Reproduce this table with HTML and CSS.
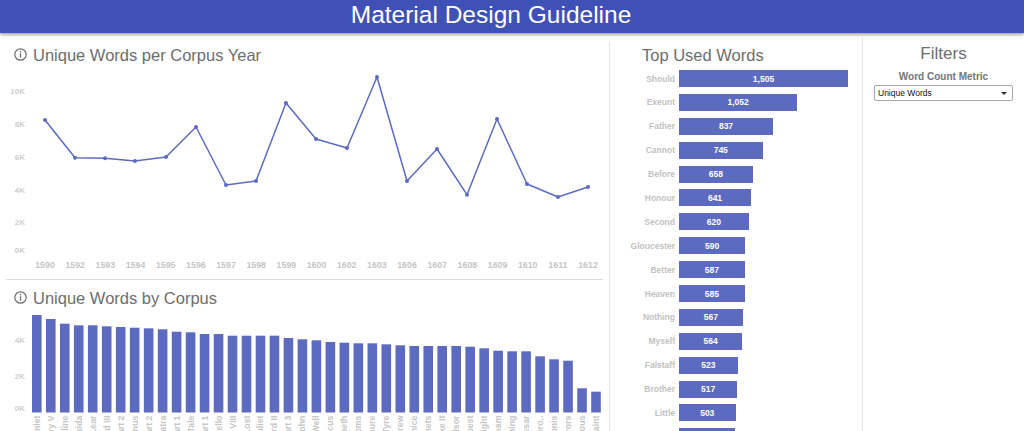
FILE: index.html
```html
<!DOCTYPE html>
<html lang="en">
<head>
<meta charset="utf-8">
<title>Material Design Guideline</title>
<link rel="stylesheet" href="styles.css">
</head>
<body>
<header class="appbar"><h1>Material Design Guideline</h1></header>
<main class="dash">
  <section class="panel-main">
    <div class="trend">
      <h2 class="chart-title"><svg class="info" viewBox="0 0 13 13" width="13" height="13"><circle cx="6.5" cy="6.5" r="5.7" fill="none" stroke="#6e6e6e" stroke-width="1.2"/><rect x="5.9" y="3" width="1.25" height="1.3" fill="#6e6e6e"/><rect x="5.9" y="5.2" width="1.25" height="4.5" fill="#6e6e6e"/></svg>Unique Words per Corpus Year</h2>
      <svg class="chart" width="597" height="214" viewBox="6 65 597 214">
        <g class="axis-y" text-anchor="end">
          <text x="25" y="94">10K</text>
          <text x="25" y="127">8K</text>
          <text x="25" y="160">6K</text>
          <text x="25" y="193">4K</text>
          <text x="25" y="224.5">2K</text>
          <text x="25" y="253">0K</text>
        </g>
        <g class="axis-x" text-anchor="middle">
          <text x="45" y="267.5">1590</text>
          <text x="75.2" y="267.5">1592</text>
          <text x="105.3" y="267.5">1593</text>
          <text x="135.5" y="267.5">1594</text>
          <text x="165.7" y="267.5">1595</text>
          <text x="195.9" y="267.5">1596</text>
          <text x="226" y="267.5">1597</text>
          <text x="256.2" y="267.5">1598</text>
          <text x="286.4" y="267.5">1599</text>
          <text x="316.5" y="267.5">1600</text>
          <text x="346.7" y="267.5">1602</text>
          <text x="376.9" y="267.5">1603</text>
          <text x="407" y="267.5">1606</text>
          <text x="437.2" y="267.5">1607</text>
          <text x="467.4" y="267.5">1608</text>
          <text x="497.6" y="267.5">1609</text>
          <text x="527.7" y="267.5">1610</text>
          <text x="557.9" y="267.5">1611</text>
          <text x="588" y="267.5">1612</text>
        </g>
        <polyline class="line" points="45,120 75,157.7 105,158.3 135,161 166,157 196,127 226,185 256,181 286,103 316,139 347,148 377,77 407,181 437,149 467,194.7 497,119 527,184 558,197 588,187"/>
        <g class="dots">
          <circle cx="45" cy="120" r="2"/><circle cx="75" cy="157.7" r="2"/><circle cx="105" cy="158.3" r="2"/><circle cx="135" cy="161" r="2"/><circle cx="166" cy="157" r="2"/><circle cx="196" cy="127" r="2"/><circle cx="226" cy="185" r="2"/><circle cx="256" cy="181" r="2"/><circle cx="286" cy="103" r="2"/><circle cx="316" cy="139" r="2"/><circle cx="347" cy="148" r="2"/><circle cx="377" cy="77" r="2"/><circle cx="407" cy="181" r="2"/><circle cx="437" cy="149" r="2"/><circle cx="467" cy="194.7" r="2"/><circle cx="497" cy="119" r="2"/><circle cx="527" cy="184" r="2"/><circle cx="558" cy="197" r="2"/><circle cx="588" cy="187" r="2"/>
        </g>
      </svg>
    </div>
    <div class="corpus">
      <h2 class="chart-title"><svg class="info" viewBox="0 0 13 13" width="13" height="13"><circle cx="6.5" cy="6.5" r="5.7" fill="none" stroke="#6e6e6e" stroke-width="1.2"/><rect x="5.9" y="3" width="1.25" height="1.3" fill="#6e6e6e"/><rect x="5.9" y="5.2" width="1.25" height="4.5" fill="#6e6e6e"/></svg>Unique Words by Corpus</h2>
      <svg class="chart" width="597" height="123" viewBox="6 308 597 123">
        <g class="axis-y" text-anchor="end">
          <text x="25" y="342.7">4K</text>
          <text x="25" y="379.3">2K</text>
          <text x="25" y="410.7">0K</text>
        </g>
        <g class="bars">
          <rect x="32" y="315" width="9.6" height="97.5"/>
          <rect x="45.98" y="319" width="9.6" height="93.5"/>
          <rect x="59.96" y="323.7" width="9.6" height="88.8"/>
          <rect x="73.94" y="325.3" width="9.6" height="87.2"/>
          <rect x="87.92" y="325.3" width="9.6" height="87.2"/>
          <rect x="101.9" y="326.3" width="9.6" height="86.2"/>
          <rect x="115.88" y="327" width="9.6" height="85.5"/>
          <rect x="129.86" y="327.7" width="9.6" height="84.8"/>
          <rect x="143.84" y="328.3" width="9.6" height="84.2"/>
          <rect x="157.82" y="329.3" width="9.6" height="83.2"/>
          <rect x="171.8" y="331.7" width="9.6" height="80.8"/>
          <rect x="185.78" y="332.3" width="9.6" height="80.2"/>
          <rect x="199.76" y="334" width="9.6" height="78.5"/>
          <rect x="213.74" y="334" width="9.6" height="78.5"/>
          <rect x="227.72" y="335.7" width="9.6" height="76.8"/>
          <rect x="241.7" y="335.7" width="9.6" height="76.8"/>
          <rect x="255.68" y="335.7" width="9.6" height="76.8"/>
          <rect x="269.66" y="335.7" width="9.6" height="76.8"/>
          <rect x="283.64" y="338" width="9.6" height="74.5"/>
          <rect x="297.62" y="339.3" width="9.6" height="73.2"/>
          <rect x="311.6" y="340.3" width="9.6" height="72.2"/>
          <rect x="325.58" y="342" width="9.6" height="70.5"/>
          <rect x="339.56" y="342.7" width="9.6" height="69.8"/>
          <rect x="353.54" y="343.3" width="9.6" height="69.2"/>
          <rect x="367.52" y="343.3" width="9.6" height="69.2"/>
          <rect x="381.5" y="344.3" width="9.6" height="68.2"/>
          <rect x="395.48" y="345.3" width="9.6" height="67.2"/>
          <rect x="409.46" y="346" width="9.6" height="66.5"/>
          <rect x="423.44" y="346" width="9.6" height="66.5"/>
          <rect x="437.42" y="346" width="9.6" height="66.5"/>
          <rect x="451.4" y="346" width="9.6" height="66.5"/>
          <rect x="465.38" y="346.7" width="9.6" height="65.8"/>
          <rect x="479.36" y="348.3" width="9.6" height="64.2"/>
          <rect x="493.34" y="350.7" width="9.6" height="61.8"/>
          <rect x="507.32" y="351.3" width="9.6" height="61.2"/>
          <rect x="521.3" y="351.3" width="9.6" height="61.2"/>
          <rect x="535.28" y="356.3" width="9.6" height="56.2"/>
          <rect x="549.26" y="359.3" width="9.6" height="53.2"/>
          <rect x="563.24" y="360.7" width="9.6" height="51.8"/>
          <rect x="577.22" y="388.3" width="9.6" height="24.2"/>
          <rect x="591.2" y="391.7" width="9.6" height="20.8"/>
        </g>
        <g class="axis-cat" text-anchor="end">
          <text transform="translate(39.8 415.5) rotate(-90)">Hamlet</text>
          <text transform="translate(53.78 415.5) rotate(-90)">Henry V</text>
          <text transform="translate(67.76 415.5) rotate(-90)">Cymbeline</text>
          <text transform="translate(81.74 415.5) rotate(-90)">Troilus and Cressida</text>
          <text transform="translate(95.72 415.5) rotate(-90)">King Lear</text>
          <text transform="translate(109.7 415.5) rotate(-90)">Richard III</text>
          <text transform="translate(123.68 415.5) rotate(-90)">Henry VI Part 2</text>
          <text transform="translate(137.66 415.5) rotate(-90)">Coriolanus</text>
          <text transform="translate(151.64 415.5) rotate(-90)">Henry IV Part 2</text>
          <text transform="translate(165.62 415.5) rotate(-90)">Antony and Cleopatra</text>
          <text transform="translate(179.6 415.5) rotate(-90)">Henry VI Part 1</text>
          <text transform="translate(193.58 415.5) rotate(-90)">Winter's Tale</text>
          <text transform="translate(207.56 415.5) rotate(-90)">Henry IV Part 1</text>
          <text transform="translate(221.54 415.5) rotate(-90)">Othello</text>
          <text transform="translate(235.52 415.5) rotate(-90)">Henry VIII</text>
          <text transform="translate(249.5 415.5) rotate(-90)">Love's Labour's Lost</text>
          <text transform="translate(263.48 415.5) rotate(-90)">Romeo and Juliet</text>
          <text transform="translate(277.46 415.5) rotate(-90)">Richard II</text>
          <text transform="translate(291.44 415.5) rotate(-90)">Henry VI Part 3</text>
          <text transform="translate(305.42 415.5) rotate(-90)">King John</text>
          <text transform="translate(319.4 415.5) rotate(-90)">All's Well That Ends Well</text>
          <text transform="translate(333.38 415.5) rotate(-90)">Titus Andronicus</text>
          <text transform="translate(347.36 415.5) rotate(-90)">Macbeth</text>
          <text transform="translate(361.34 415.5) rotate(-90)">Poems</text>
          <text transform="translate(375.32 415.5) rotate(-90)">Measure for Measure</text>
          <text transform="translate(389.3 415.5) rotate(-90)">Pericles Prince of Tyre</text>
          <text transform="translate(403.28 415.5) rotate(-90)">Taming of the Shrew</text>
          <text transform="translate(417.26 415.5) rotate(-90)">Merchant of Venice</text>
          <text transform="translate(431.24 415.5) rotate(-90)">Sonnets</text>
          <text transform="translate(445.22 415.5) rotate(-90)">As You Like It</text>
          <text transform="translate(459.2 415.5) rotate(-90)">Merry Wives of Windsor</text>
          <text transform="translate(473.18 415.5) rotate(-90)">The Tempest</text>
          <text transform="translate(487.16 415.5) rotate(-90)">Twelfth Night</text>
          <text transform="translate(501.14 415.5) rotate(-90)">Midsummer Night's Dream</text>
          <text transform="translate(515.12 415.5) rotate(-90)">Much Ado About Nothing</text>
          <text transform="translate(529.1 415.5) rotate(-90)">Julius Caesar</text>
          <text transform="translate(543.08 415.5) rotate(-90)">Two Gentlemen of Vero..</text>
          <text transform="translate(557.06 415.5) rotate(-90)">Venus and Adonis</text>
          <text transform="translate(571.04 415.5) rotate(-90)">Comedy of Errors</text>
          <text transform="translate(585.02 415.5) rotate(-90)">Various</text>
          <text transform="translate(599 415.5) rotate(-90)">A Lover's Complaint</text>
        </g>
      </svg>
    </div>
  </section>

  <section class="panel-words">
    <h2 class="words-title">Top Used Words</h2>
    <ul class="word-list">
      <li class="word-row"><span class="word-label">Should</span><span class="word-bar" style="width:169px">1,505</span></li>
      <li class="word-row"><span class="word-label">Exeunt</span><span class="word-bar" style="width:118.1px">1,052</span></li>
      <li class="word-row"><span class="word-label">Father</span><span class="word-bar" style="width:94px">837</span></li>
      <li class="word-row"><span class="word-label">Cannot</span><span class="word-bar" style="width:83.5px">745</span></li>
      <li class="word-row"><span class="word-label">Before</span><span class="word-bar" style="width:73.9px">658</span></li>
      <li class="word-row"><span class="word-label">Honour</span><span class="word-bar" style="width:72px">641</span></li>
      <li class="word-row"><span class="word-label">Second</span><span class="word-bar" style="width:69.6px">620</span></li>
      <li class="word-row"><span class="word-label">Gloucester</span><span class="word-bar" style="width:66.3px">590</span></li>
      <li class="word-row"><span class="word-label">Better</span><span class="word-bar" style="width:65.9px">587</span></li>
      <li class="word-row"><span class="word-label">Heaven</span><span class="word-bar" style="width:65.7px">585</span></li>
      <li class="word-row"><span class="word-label">Nothing</span><span class="word-bar" style="width:63.7px">567</span></li>
      <li class="word-row"><span class="word-label">Myself</span><span class="word-bar" style="width:63.3px">564</span></li>
      <li class="word-row"><span class="word-label">Falstaff</span><span class="word-bar" style="width:58.7px">523</span></li>
      <li class="word-row"><span class="word-label">Brother</span><span class="word-bar" style="width:58.1px">517</span></li>
      <li class="word-row"><span class="word-label">Little</span><span class="word-bar" style="width:56.5px">503</span></li>
      <li class="word-row"><span class="word-label">Master</span><span class="word-bar" style="width:56px">499</span></li>
    </ul>
  </section>

  <section class="panel-filters">
    <h2 class="filters-title">Filters</h2>
    <div class="filter-label">Word Count Metric</div>
    <div class="select"><span>Unique Words</span><span class="caret"></span></div>
  </section>
</main>
</body>
</html>
```

FILE: styles.css
```css
html, body {
  margin: 0;
  padding: 0;
}

body {
  width: 1024px;
  height: 431px;
  overflow: hidden;
  background: #ffffff;
  font-family: "Liberation Sans", Arial, sans-serif;
  color: #6e6e6e;
}

.appbar {
  position: relative;
  z-index: 2;
  height: 33px;
  padding-right: 42px;
  background: #3f51b5;
  box-shadow: 0 2px 3px rgba(0, 0, 0, 0.35);
  text-align: center;
  color: #ffffff;
}

.appbar h1 {
  margin: 0;
  font-size: 24.5px;
  font-weight: normal;
  line-height: 29px;
}

.dash {
  display: grid;
  grid-template-columns: 610px 253px 1fr;
  height: 398px;
}

/* left column with the two charts */
.panel-main {
  box-sizing: border-box;
  margin-top: 9px;
  border-right: 1px solid #e4e4e4;
  overflow: hidden;
}

.trend {
  margin: 0 6px;
  border-bottom: 1px solid #dcdcdc;
}

.trend .chart-title {
  margin-top: 3px;
}

.corpus {
  margin: 0 6px;
}

.corpus .chart-title {
  margin-top: 8px;
}

.chart-title {
  display: flex;
  align-items: center;
  gap: 6px;
  margin: 0;
  padding-left: 8px;
  font-size: 16.5px;
  font-weight: normal;
  line-height: 20px;
  color: #6e6e6e;
}

.info {
  flex: none;
  margin-bottom: 2px;
}

.chart {
  display: block;
  overflow: hidden;
}

.axis-y text {
  font-size: 8px;
  font-weight: bold;
  fill: #cdcdcd;
}

.axis-x text,
.axis-cat text {
  font-size: 8.8px;
  font-weight: bold;
  fill: #c6c6c6;
}

.line {
  fill: none;
  stroke: #5c6bc0;
  stroke-width: 1.5;
  stroke-linejoin: round;
}

.dots circle {
  fill: #5c6bc0;
}

.bars rect {
  fill: #5c6bc0;
}

/* top used words */
.panel-words {
  box-sizing: border-box;
  margin-top: 4px;
  padding-top: 8px;
  border-right: 1px solid #e4e4e4;
  overflow: hidden;
}

.words-title {
  margin: 0;
  padding-left: 32px;
  font-size: 16.5px;
  font-weight: normal;
  line-height: 20px;
  color: #6e6e6e;
}

.word-list {
  list-style: none;
  margin: 5px 0 0;
  padding: 0;
  display: flex;
  flex-direction: column;
  gap: 6.9px;
}

.word-row {
  display: grid;
  grid-template-columns: 65px 1fr;
  column-gap: 4px;
  align-items: center;
  height: 17px;
}

.word-label {
  text-align: right;
  font-size: 8.5px;
  font-weight: bold;
  color: #c2c2c2;
  white-space: nowrap;
}

.word-bar {
  display: flex;
  align-items: center;
  justify-content: center;
  height: 17px;
  background: #5c6bc0;
  color: #ffffff;
  font-size: 8.5px;
  font-weight: bold;
}

/* filters */
.panel-filters {
  padding-top: 11px;
  text-align: center;
}

.filters-title {
  margin: 0;
  font-size: 17px;
  font-weight: normal;
  line-height: 20px;
  color: #6e6e6e;
}

.filter-label {
  margin-top: 7px;
  font-size: 10px;
  font-weight: bold;
  line-height: 12px;
  color: #757575;
}

.select {
  box-sizing: border-box;
  display: flex;
  align-items: center;
  justify-content: space-between;
  width: 139px;
  height: 16px;
  margin: 2px auto 0;
  padding: 0 5px 0 3px;
  border: 1px solid #a8a8a8;
  border-radius: 2px;
  background: #ffffff;
  text-align: left;
  font-size: 8.5px;
  color: #111111;
}

.caret {
  width: 0;
  height: 0;
  border-left: 3px solid transparent;
  border-right: 3px solid transparent;
  border-top: 3.5px solid #333333;
}
```
